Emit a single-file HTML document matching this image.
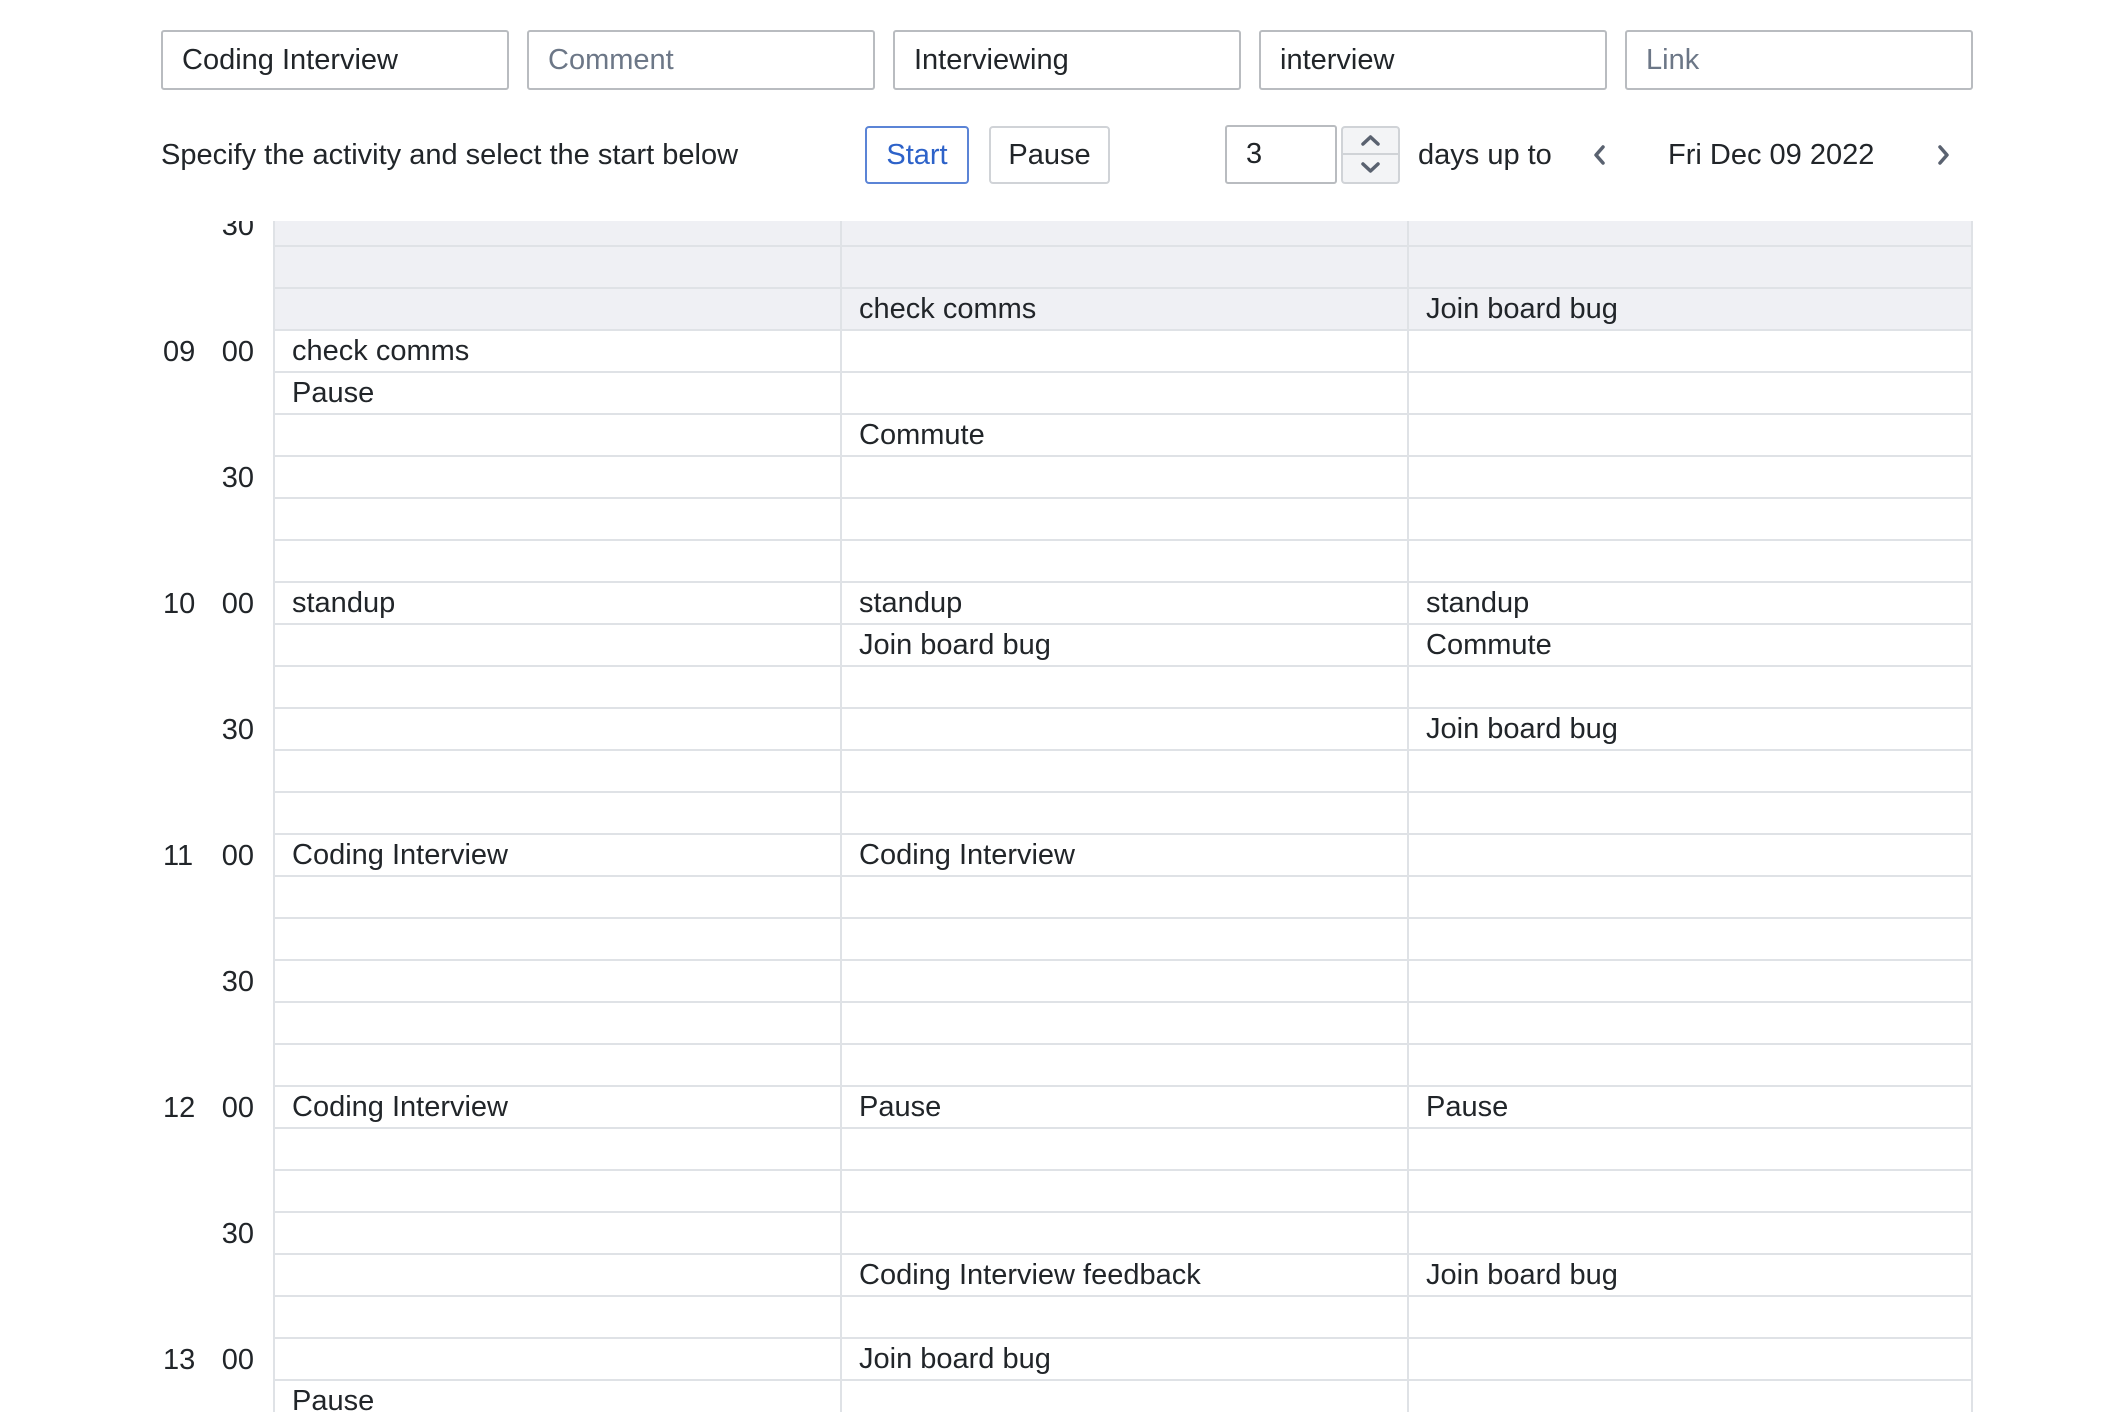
<!DOCTYPE html>
<html><head><meta charset="utf-8"><style>
*{box-sizing:border-box;margin:0;padding:0}
body{width:2128px;height:1412px;overflow:hidden;background:#fff;font-family:"Liberation Sans",sans-serif;font-size:29px;color:#212529;position:relative}
.inp{position:absolute;top:30px;height:60px;width:348px;border:2px solid #b9bcc0;border-radius:3px;padding-left:19px;line-height:56px}
.ph{color:#6c7787}
.btn{position:absolute;top:126px;height:58px;border:2px solid #d0d3d7;border-radius:4px;text-align:center;line-height:54px}
.wrap{position:absolute;left:0;top:221px;width:2128px;height:1191px;overflow:hidden}
.inner{position:absolute;left:0;top:-16px}
.r{display:flex;height:42px}
.lab{width:273px;position:relative;height:42px;line-height:42px}
.lab .h{position:absolute;left:163px}
.lab .m{position:absolute;right:19px}
.c{width:567px;border-left:2px solid #dfe2e6;border-bottom:2px solid #dfe2e6;padding-left:17px;line-height:40px;white-space:nowrap}
.c:last-child{width:566px;border-right:2px solid #dfe2e6}
.g .c{background:#eff0f4}
</style></head><body>
<div class="inp" style="left:161px">Coding Interview</div>
<div class="inp ph" style="left:527px">Comment</div>
<div class="inp" style="left:893px">Interviewing</div>
<div class="inp" style="left:1259px">interview</div>
<div class="inp ph" style="left:1625px">Link</div>

<div style="position:absolute;left:161px;top:136px;line-height:38px">Specify the activity and select the start below</div>
<div class="btn" style="left:865px;width:104px;border-color:#5b84d6;color:#2d62c9">Start</div>
<div class="btn" style="left:989px;width:121px">Pause</div>
<div style="position:absolute;left:1225px;top:125px;width:112px;height:59px;border:2px solid #b9bcc0;border-radius:3px;padding-left:19px;line-height:55px">3</div>
<div style="position:absolute;left:1341px;top:126px;width:59px;height:58px;border:2px solid #d0d3d7;border-radius:4px;background:#f3f4f6">
<div style="height:27px;border-bottom:2px solid #d0d3d7"></div>
<svg style="position:absolute;left:0;top:0" width="55" height="54" viewBox="0 0 55 54"><path d="M20 16 L27.5 9 L35 16 M20 36 L27.5 43 L35 36" fill="none" stroke="#5a6270" stroke-width="3.5" stroke-linecap="round" stroke-linejoin="round"/></svg>
</div>
<div style="position:absolute;left:1418px;top:136px;line-height:38px">days up to</div>
<svg style="position:absolute;left:1590px;top:142px" width="20" height="26"><path d="M13 5 L6 13 L13 21" fill="none" stroke="#5a6270" stroke-width="3.5" stroke-linecap="round" stroke-linejoin="round"/></svg>
<div style="position:absolute;left:1668px;top:136px;line-height:38px">Fri Dec 09 2022</div>
<svg style="position:absolute;left:1934px;top:142px" width="20" height="26"><path d="M6 5 L13 13 L6 21" fill="none" stroke="#5a6270" stroke-width="3.5" stroke-linecap="round" stroke-linejoin="round"/></svg>

<div class="wrap"><div class="inner">
<div class="r g"><div class="lab"><span class="m">30</span></div><div class="c"></div><div class="c"></div><div class="c"></div></div>
<div class="r g"><div class="lab"></div><div class="c"></div><div class="c"></div><div class="c"></div></div>
<div class="r g"><div class="lab"></div><div class="c"></div><div class="c">check comms</div><div class="c">Join board bug</div></div>
<div class="r"><div class="lab"><span class="h">09</span><span class="m">00</span></div><div class="c">check comms</div><div class="c"></div><div class="c"></div></div>
<div class="r"><div class="lab"></div><div class="c">Pause</div><div class="c"></div><div class="c"></div></div>
<div class="r"><div class="lab"></div><div class="c"></div><div class="c">Commute</div><div class="c"></div></div>
<div class="r"><div class="lab"><span class="m">30</span></div><div class="c"></div><div class="c"></div><div class="c"></div></div>
<div class="r"><div class="lab"></div><div class="c"></div><div class="c"></div><div class="c"></div></div>
<div class="r"><div class="lab"></div><div class="c"></div><div class="c"></div><div class="c"></div></div>
<div class="r"><div class="lab"><span class="h">10</span><span class="m">00</span></div><div class="c">standup</div><div class="c">standup</div><div class="c">standup</div></div>
<div class="r"><div class="lab"></div><div class="c"></div><div class="c">Join board bug</div><div class="c">Commute</div></div>
<div class="r"><div class="lab"></div><div class="c"></div><div class="c"></div><div class="c"></div></div>
<div class="r"><div class="lab"><span class="m">30</span></div><div class="c"></div><div class="c"></div><div class="c">Join board bug</div></div>
<div class="r"><div class="lab"></div><div class="c"></div><div class="c"></div><div class="c"></div></div>
<div class="r"><div class="lab"></div><div class="c"></div><div class="c"></div><div class="c"></div></div>
<div class="r"><div class="lab"><span class="h">11</span><span class="m">00</span></div><div class="c">Coding Interview</div><div class="c">Coding Interview</div><div class="c"></div></div>
<div class="r"><div class="lab"></div><div class="c"></div><div class="c"></div><div class="c"></div></div>
<div class="r"><div class="lab"></div><div class="c"></div><div class="c"></div><div class="c"></div></div>
<div class="r"><div class="lab"><span class="m">30</span></div><div class="c"></div><div class="c"></div><div class="c"></div></div>
<div class="r"><div class="lab"></div><div class="c"></div><div class="c"></div><div class="c"></div></div>
<div class="r"><div class="lab"></div><div class="c"></div><div class="c"></div><div class="c"></div></div>
<div class="r"><div class="lab"><span class="h">12</span><span class="m">00</span></div><div class="c">Coding Interview</div><div class="c">Pause</div><div class="c">Pause</div></div>
<div class="r"><div class="lab"></div><div class="c"></div><div class="c"></div><div class="c"></div></div>
<div class="r"><div class="lab"></div><div class="c"></div><div class="c"></div><div class="c"></div></div>
<div class="r"><div class="lab"><span class="m">30</span></div><div class="c"></div><div class="c"></div><div class="c"></div></div>
<div class="r"><div class="lab"></div><div class="c"></div><div class="c">Coding Interview feedback</div><div class="c">Join board bug</div></div>
<div class="r"><div class="lab"></div><div class="c"></div><div class="c"></div><div class="c"></div></div>
<div class="r"><div class="lab"><span class="h">13</span><span class="m">00</span></div><div class="c"></div><div class="c">Join board bug</div><div class="c"></div></div>
<div class="r"><div class="lab"></div><div class="c">Pause</div><div class="c"></div><div class="c"></div></div>
</div></div>
</body></html>
